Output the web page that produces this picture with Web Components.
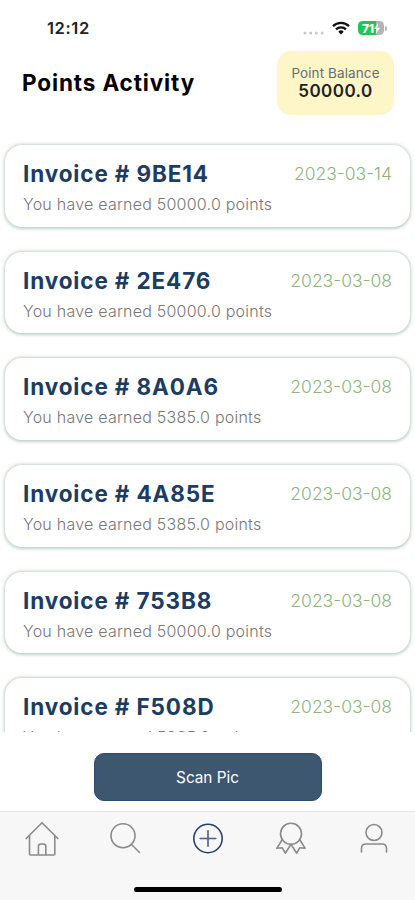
<!DOCTYPE html>
<html lang="en">
<head>
<meta charset="UTF-8">
<meta name="viewport" content="width=device-width, initial-scale=1.0">
<title>Points Activity</title>
<style>
    body {
        margin: 0;
        font-family: Inter, "Liberation Sans", sans-serif;
        background-color: #fefffe;
    }
</style>
</head>
<body>
<points-app></points-app>

<script>
class StatusBar extends HTMLElement {
    constructor() {
        super();
        this.shadowDOM = this.attachShadow({mode: 'open'});
    }

    connectedCallback() {
        this.shadowDOM.innerHTML = `
            <style>
            :host {
                display: flex;
                justify-content: space-between;
                align-items: center;
                height: 56px;
                box-sizing: border-box;
                padding: 0 28px 0 47px;
                color: #222;
            }

            .time {
                font-size: 16.5px;
                font-weight: 600;
                letter-spacing: 0.6px;
            }

            .icons {
                display: flex;
                align-items: center;
            }

            .dots {
                margin: 10px 8px 0 0;
            }

            .wifi {
                margin-right: 8px;
            }

            .battery {
                display: flex;
                align-items: center;
                justify-content: center;
                width: 26px;
                height: 14px;
                border-radius: 4.5px;
                background: linear-gradient(90deg, #1fc653 71%, #b4b4b4 71%);
                color: white;
                font-size: 12px;
                font-weight: 800;
                letter-spacing: -0.3px;
            }

            .cap {
                width: 2px;
                height: 5px;
                margin-left: 1px;
                border-radius: 0 2px 2px 0;
                background-color: #b4b4b4;
            }
            </style>

            <span class="time">12:12</span>
            <div class="icons">
                <svg class="dots" width="21" height="4" fill="#c9c9c9">
                    <circle cx="2" cy="2" r="1.5"/><circle cx="7.7" cy="2" r="1.5"/>
                    <circle cx="13.4" cy="2" r="1.5"/><circle cx="19.1" cy="2" r="1.5"/>
                </svg>
                <svg class="wifi" width="18" height="14" viewBox="0 0 18 14" fill="none" stroke="#111" stroke-width="2.3">
                    <path d="M1 5.1a11.5 11.5 0 0 1 16 0M4 8.3a7.2 7.2 0 0 1 10 0"/>
                    <path d="M9 13.5 6.3 10.7a3.8 3.8 0 0 1 5.4 0z" fill="#111" stroke="none"/>
                </svg>
                <div class="battery"><span>71</span>
                    <svg width="6" height="11" viewBox="0 0 6 11" fill="white"><path d="M4.2 0 0 6h2.5L1.8 11 6 4.8H3.5z"/></svg>
                </div>
                <div class="cap"></div>
            </div>
            `;
    }
}

class PointBalance extends HTMLElement {
    constructor() {
        super();
        this.shadowDOM = this.attachShadow({mode: 'open'});
    }

    connectedCallback() {
        this.shadowDOM.innerHTML = `
            <style>
            :host {
                display: flex;
                flex-direction: column;
                align-items: center;
                justify-content: center;
                width: 117px;
                height: 64px;
                margin-top: -1px;
                border-radius: 14px;
                background-color: #fff6c8;
            }

            .label {
                font-size: 13.5px;
                line-height: 18px;
                letter-spacing: 0.1px;
                color: #686d74;
                white-space: nowrap;
            }

            .value {
                font-size: 17px;
                line-height: 19px;
                font-weight: 600;
                letter-spacing: 0.45px;
                color: #222;
            }
            </style>

            <span class="label">Point Balance</span>
            <span class="value"><slot></slot></span>
            `;
    }
}

class InvoiceCard extends HTMLElement {
    constructor() {
        super();
        this.shadowDOM = this.attachShadow({mode: 'open'});
    }

    connectedCallback() {
        this.shadowDOM.innerHTML = `
            <style>
            :host {
                display: block;
                flex: none;
                height: 81.5px;
                box-sizing: border-box;
                padding: 13px 18px 0;
                border-radius: 17px;
                background-color: white;
                box-shadow: 0 0.5px 3px 1px rgba(80, 125, 90, 0.34);
            }

            .top {
                display: flex;
                justify-content: space-between;
                align-items: center;
                height: 31px;
            }

            .name {
                font-size: 22.5px;
                font-weight: 700;
                letter-spacing: 0.87px;
                color: #1d3c62;
                white-space: nowrap;
            }

            .date {
                font-size: 17.5px;
                font-weight: 300;
                color: #8fb380;
                white-space: nowrap;
            }

            .note {
                margin: 5px 0 0;
                font-size: 16px;
                line-height: 20px;
                font-weight: 300;
                letter-spacing: 0.23px;
                color: #777;
                white-space: nowrap;
            }
            </style>

            <div class="top">
                <span class="name"><slot name="name"></slot></span>
                <span class="date"><slot name="date"></slot></span>
            </div>
            <p class="note"><slot></slot></p>
            `;
    }
}

class TabBar extends HTMLElement {
    constructor() {
        super();
        this.shadowDOM = this.attachShadow({mode: 'open'});
    }

    connectedCallback() {
        this.shadowDOM.innerHTML = `
            <style>
            :host {
                display: flex;
                flex-direction: column;
                justify-content: space-between;
                align-items: center;
                height: 89px;
                box-sizing: border-box;
                padding-bottom: 8px;
                border-top: 1px solid #e3e3e3;
                background-color: #f7f7f7;
            }

            nav {
                display: grid;
                grid-template-columns: repeat(5, 83px);
                justify-items: center;
                padding-top: 9px;
            }

            svg {
                fill: none;
                stroke: #8b8b8b;
                stroke-width: 1.6;
                stroke-linecap: round;
                stroke-linejoin: round;
            }

            .active {
                stroke: #24416d;
            }

            .indicator {
                width: 148px;
                height: 5px;
                border-radius: 3px;
                background-color: black;
            }
            </style>

            <nav>
                <svg width="36" height="36" viewBox="0 0 36 36">
                    <path d="M2.2 17.5 18 1.7 33.8 17.5M5.5 14.8v18.2q0 1 1 1h23.3q1 0 1-1V14.8M14.4 34V25.5q0-2.5 2.5-2.5h2.4q2.5 0 2.5 2.5V34"/>
                </svg>
                <svg width="36" height="36" viewBox="0 0 36 36">
                    <circle cx="16" cy="14.7" r="12"/><path d="m24.5 23.5 8 8"/>
                </svg>
                <svg class="active" width="36" height="36" viewBox="0 0 36 36">
                    <circle cx="18" cy="17.5" r="14.2"/><path d="M18 9.7v15.6M10.2 17.5h15.6" stroke="#4a607f"/>
                </svg>
                <svg width="36" height="36" viewBox="0 0 36 36">
                    <circle cx="18" cy="12.8" r="10.5"/>
                    <path d="M9 19 3.8 27.3 9.3 26.8 12.3 32.2 18 23.3 23.7 32.2 26.7 26.8 32.2 27.3 27 19"/>
                </svg>
                <svg width="36" height="36" viewBox="0 0 36 36">
                    <circle cx="18" cy="11.5" r="8"/>
                    <path d="M5.5 31v-3.5q0-4.5 4.5-4.5h16q4.5 0 4.5 4.5V31"/>
                </svg>
            </nav>
            <div class="indicator"></div>
            `;
    }
}

class PointsApp extends HTMLElement {
    constructor() {
        super();
        this.shadowDOM = this.attachShadow({mode: 'open'});
        this.invoices = [
            {id: '9BE14', date: '2023-03-14', points: '50000.0'},
            {id: '2E476', date: '2023-03-08', points: '50000.0'},
            {id: '8A0A6', date: '2023-03-08', points: '5385.0'},
            {id: '4A85E', date: '2023-03-08', points: '5385.0'},
            {id: '753B8', date: '2023-03-08', points: '50000.0'},
            {id: 'F508D', date: '2023-03-08', points: '5385.0'}
        ];
    }

    connectedCallback() {
        this.render();
    }

    render() {
        this.shadowDOM.innerHTML = `
            <style>
            :host {
                display: flex;
                flex-direction: column;
                height: 900px;
                overflow: hidden;
            }

            header {
                display: flex;
                justify-content: space-between;
                align-items: center;
                height: 64px;
                margin-top: -5px;
                padding: 0 21px 0 22px;
            }

            h1 {
                margin: -2px 0 0;
                font-size: 22.5px;
                font-weight: 700;
                letter-spacing: 0.87px;
                color: black;
            }

            .list {
                display: flex;
                flex-direction: column;
                gap: 25.2px;
                height: 601px;
                margin-top: 16px;
                padding: 14px 5px 0;
                box-sizing: border-box;
                overflow: hidden;
            }

            .action {
                flex: 1;
                display: flex;
                justify-content: center;
                align-items: flex-start;
                padding-top: 21px;
            }

            button {
                width: 228px;
                height: 48px;
                border: 1px solid #2c4a6c;
                border-radius: 10px;
                background-color: #3e5771;
                color: white;
                font-family: inherit;
                font-size: 15.3px;
            }
            </style>

            <status-bar></status-bar>
            <header>
                <h1>Points Activity</h1>
                <point-balance>50000.0</point-balance>
            </header>
            <div class="list">
                ${this.invoices.map(item => `
                <invoice-card>
                    <span slot="name">Invoice # ${item.id}</span>
                    <span slot="date">${item.date}</span>
                    You have earned ${item.points} points
                </invoice-card>`).join('')}
            </div>
            <div class="action"><button type="button">Scan Pic</button></div>
            <tab-bar></tab-bar>
            `;
    }
}

customElements.define('status-bar', StatusBar);
customElements.define('point-balance', PointBalance);
customElements.define('invoice-card', InvoiceCard);
customElements.define('tab-bar', TabBar);
customElements.define('points-app', PointsApp);
</script>
</body>
</html>
